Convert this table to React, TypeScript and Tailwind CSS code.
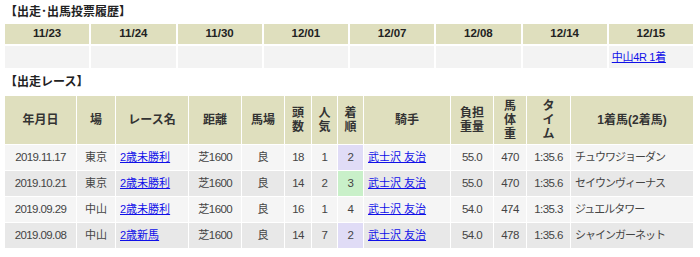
import React from "react";

const dates = ["11/23", "11/24", "11/30", "12/01", "12/07", "12/08", "12/14", "12/15"];

type Row = {
  date: string;
  place: string;
  race: string;
  dist: string;
  cond: string;
  heads: string;
  pop: string;
  rank: string;
  rankBg: string;
  jockey: string;
  weight: string;
  body: string;
  time: string;
  winner: string;
  bg: string;
};

const rows: Row[] = [
  { date: "2019.11.17", place: "東京", race: "2歳未勝利", dist: "芝1600", cond: "良", heads: "18", pop: "1", rank: "2", rankBg: "bg-[#e0dcf6]", jockey: "武士沢 友治", weight: "55.0", body: "470", time: "1:35.6", winner: "チュウワジョーダン", bg: "bg-[#f5f5f5]" },
  { date: "2019.10.21", place: "東京", race: "2歳未勝利", dist: "芝1600", cond: "良", heads: "14", pop: "2", rank: "3", rankBg: "bg-[#c9f0c9]", jockey: "武士沢 友治", weight: "55.0", body: "470", time: "1:35.6", winner: "セイウンヴィーナス", bg: "bg-[#e8e8e8]" },
  { date: "2019.09.29", place: "中山", race: "2歳未勝利", dist: "芝1600", cond: "良", heads: "16", pop: "1", rank: "4", rankBg: "", jockey: "武士沢 友治", weight: "54.0", body: "474", time: "1:35.3", winner: "ジュエルタワー", bg: "bg-[#f5f5f5]" },
  { date: "2019.09.08", place: "中山", race: "2歳新馬", dist: "芝1600", cond: "良", heads: "14", pop: "7", rank: "2", rankBg: "bg-[#e0dcf6]", jockey: "武士沢 友治", weight: "54.0", body: "478", time: "1:35.6", winner: "シャインガーネット", bg: "bg-[#e8e8e8]" },
];

const base = "font-['Liberation_Sans','Noto_Sans_CJK_JP',sans-serif]";
const num = "text-[11.5px] tracking-[-0.6px] text-[#444]";

function H({ children }: { children: React.ReactNode }) {
  return (
    <div className="bg-[#dfdfbe] flex items-center justify-center text-center font-bold text-[12px] leading-[14px] text-[#333]">
      {children}
    </div>
  );
}

export default function App() {
  return (
    <div className={`${base} w-[700px] h-[257px] bg-white pt-[4px] text-[#333]`}>
      <div className="h-[16px] leading-[16px] pl-[5px] text-[12px] font-bold text-[#222]">【出走･出馬投票履歴】</div>
      <div className="mt-[4px] ml-[5px] w-[688px] grid grid-cols-8 grid-rows-[20px_22px] gap-[2px]">
        {dates.map((d) => (
          <div key={d} className="bg-[#dfdfbe] flex items-center justify-center font-bold text-[11.5px] text-[#222]">
            {d}
          </div>
        ))}
        {dates.map((d, i) => (
          <div key={"c" + d} className="bg-[#f3f3f3] flex items-center pl-[3px] text-[11px]">
            {i === 7 ? (
              <a href="#" className="text-[#1010e8] underline tracking-[-0.3px]">中山4R 1着</a>
            ) : null}
          </div>
        ))}
      </div>
      <div className="mt-[6px] h-[16px] leading-[16px] pl-[5px] text-[12px] font-bold text-[#222]">【出走レース】</div>
      <div className="mt-[6px] ml-[5px] w-[688px] grid grid-cols-[71px_38px_72px_52px_42px_26px_25px_25px_86px_42px_32px_43px_122px] grid-rows-[48px_25px_25px_25px_25px] gap-[1px] text-[11px] text-[#444]">
        <H>年月日</H>
        <H>場</H>
        <H>レース名</H>
        <H>距離</H>
        <H>馬場</H>
        <H><span>頭<br />数</span></H>
        <H><span>人<br />気</span></H>
        <H><span>着<br />順</span></H>
        <H>騎手</H>
        <H><span>負担<br />重量</span></H>
        <H><span>馬<br />体<br />重</span></H>
        <H><span>タ<br />イ<br />ム</span></H>
        <H>1着馬(2着馬)</H>
        {rows.map((r, i) => (
          <React.Fragment key={i}>
            <div className={`${r.bg} ${num} flex items-center justify-center`}>{r.date}</div>
            <div className={`${r.bg} flex items-center justify-center`}>{r.place}</div>
            <div className={`${r.bg} flex items-center pl-[4px]`}>
              <a href="#" className="text-[#1010e8] underline">{r.race}</a>
            </div>
            <div className={`${r.bg} ${num} flex items-center justify-center`}>{r.dist}</div>
            <div className={`${r.bg} flex items-center justify-center`}>{r.cond}</div>
            <div className={`${r.bg} ${num} flex items-center justify-center`}>{r.heads}</div>
            <div className={`${r.bg} ${num} flex items-center justify-center`}>{r.pop}</div>
            <div className={`${r.rankBg || r.bg} ${num} flex items-center justify-center`}>{r.rank}</div>
            <div className={`${r.bg} flex items-center pl-[4px]`}>
              <a href="#" className="text-[#1010e8] underline">{r.jockey}</a>
            </div>
            <div className={`${r.bg} ${num} flex items-center justify-center`}>{r.weight}</div>
            <div className={`${r.bg} ${num} flex items-center justify-center`}>{r.body}</div>
            <div className={`${r.bg} ${num} flex items-center justify-center`}>{r.time}</div>
            <div className={`${r.bg} flex items-center pl-[4px] tracking-[-1px] text-[#444]`}>{r.winner}</div>
          </React.Fragment>
        ))}
      </div>
    </div>
  );
}
